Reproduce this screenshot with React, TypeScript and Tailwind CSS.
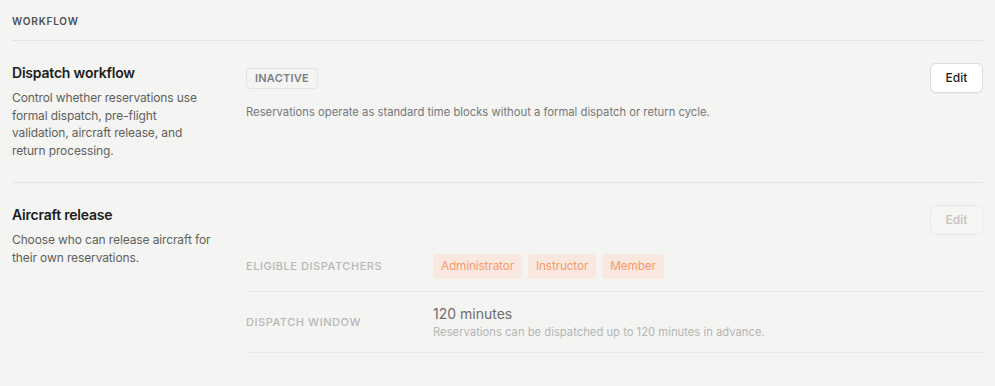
import React from 'react'

const font = { fontFamily: 'Inter, "Noto Sans", sans-serif' }

const EditButton = ({ disabled }: { disabled?: boolean }) => (
  <button
    disabled={disabled}
    className={
      disabled
        ? 'h-[30px] w-[53px] rounded-md border border-[#e9e9e7] bg-[#f5f5f3] text-[12px] font-medium text-[#c2c2c0]'
        : 'h-[30px] w-[53px] rounded-md border border-[#dcdcda] bg-white text-[12px] font-medium text-[#1c1c1c] shadow-[0_1px_1px_rgba(0,0,0,0.04)]'
    }
  >
    Edit
  </button>
)

const Tag = ({ label }: { label: string }) => (
  <span className="inline-flex h-[25px] items-center rounded px-2 text-[11.75px] tracking-[-0.01em] text-[#f99a6b] bg-[#f9e8df]">
    {label}
  </span>
)

const App = () => {
  return (
    <div className="min-h-[386px] w-full bg-[#f4f4f2] px-3" style={font}>
      <div className="border-b border-[#e4e4e2] pt-[15px] pb-[13px] text-[10px] font-semibold uppercase leading-[12px] tracking-[0.08em] text-[#4b4f57]">
        Workflow
      </div>

      <div className="flex gap-[34px] border-b border-[#e4e4e2] pt-[22px] pb-[22px]">
        <div className="w-[200px] shrink-0">
          <h3 className="text-[14px] font-semibold leading-5 tracking-[-0.015em] text-[#1c1c1c]">Dispatch workflow</h3>
          <p className="mt-[6px] text-[12px] leading-[17.7px] tracking-[-0.01em] text-[#5f5f5d]">
            Control whether reservations use formal dispatch, pre-flight validation, aircraft release, and return
            processing.
          </p>
        </div>
        <div className="flex-1">
          <div className="flex items-center justify-between">
            <span className="inline-flex h-[21px] items-center rounded border border-[#e3e3e1] px-2 text-[11px] font-semibold tracking-[0.02em] text-[#7b7e85]">
              INACTIVE
            </span>
            <EditButton />
          </div>
          <p className="mt-[11px] text-[11.25px] leading-4 text-[#76767a]">
            Reservations operate as standard time blocks without a formal dispatch or return cycle.
          </p>
        </div>
      </div>

      <div className="flex gap-[34px] pt-[22px]">
        <div className="w-[200px] shrink-0">
          <h3 className="text-[14px] font-semibold leading-5 tracking-[-0.015em] text-[#1c1c1c]">Aircraft release</h3>
          <p className="mt-[6px] text-[12px] leading-[17.7px] tracking-[-0.01em] text-[#5f5f5d]">
            Choose who can release aircraft for their own reservations.
          </p>
        </div>
        <div className="flex-1">
          <div className="flex justify-end">
            <EditButton disabled />
          </div>
          <div className="mt-[7px]">
            <div className="flex items-center border-b border-[#e8e8e6] py-3">
              <div className="w-[187px] shrink-0 text-[11px] font-medium tracking-[0.05em] text-[#b7b7b9]">
                ELIGIBLE DISPATCHERS
              </div>
              <div className="flex gap-[6px]">
                <Tag label="Administrator" />
                <Tag label="Instructor" />
                <Tag label="Member" />
              </div>
            </div>
            <div className="flex items-center border-b border-[#e8e8e6] py-3">
              <div className="w-[187px] shrink-0 text-[11px] font-medium tracking-[0.05em] text-[#b7b7b9]">
                DISPATCH WINDOW
              </div>
              <div>
                <div className="text-[14px] leading-5 text-[#6e6e6e]">120 minutes</div>
                <div className="text-[11.25px] leading-4 text-[#b5b5b5]">
                  Reservations can be dispatched up to 120 minutes in advance.
                </div>
              </div>
            </div>
          </div>
        </div>
      </div>
    </div>
  )
}

export default App
